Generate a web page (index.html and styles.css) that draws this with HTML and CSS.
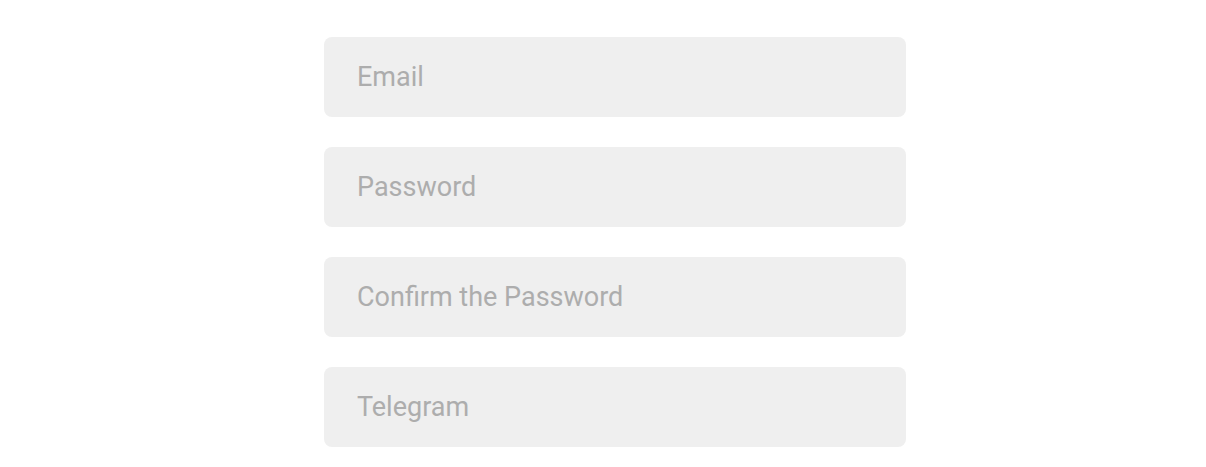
FILE: index.html
```html
<!DOCTYPE html>
<html lang="en">
<head>
<meta charset="utf-8">
<title>Sign up</title>
<link rel="stylesheet" href="styles.css">
</head>
<body>
<form class="form">
  <input class="field" type="email" placeholder="Email">
  <input class="field" type="password" placeholder="Password">
  <input class="field" type="password" placeholder="Confirm the Password">
  <input class="field" type="text" placeholder="Telegram">
</form>
</body>
</html>
```

FILE: styles.css
```css
html, body {
  margin: 0;
  padding: 0;
  background: #ffffff;
}
body {
  font-family: Roboto, "Liberation Sans", sans-serif;
}
.form {
  display: flex;
  flex-direction: column;
  gap: 30px;
  width: 582px;
  margin: 37px 0 0 324px;
}
.field {
  box-sizing: border-box;
  width: 100%;
  height: 80px;
  border: none;
  outline: none;
  border-radius: 8px;
  background: #efefef;
  padding: 0 33px;
  font-family: Roboto, "Liberation Sans", sans-serif;
  font-size: 27px;
  color: #444;
}
.field::placeholder {
  color: #adadad;
  opacity: 1;
}
```
